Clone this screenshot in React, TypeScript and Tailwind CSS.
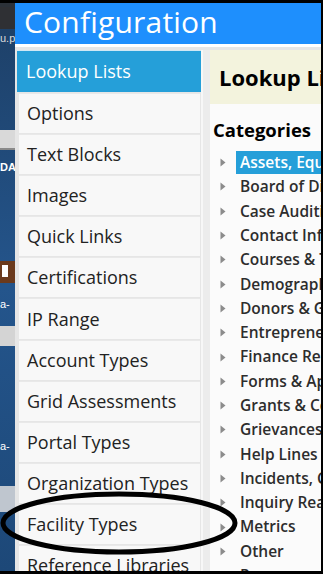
const menu = [
  'Lookup Lists',
  'Options',
  'Text Blocks',
  'Images',
  'Quick Links',
  'Certifications',
  'IP Range',
  'Account Types',
  'Grid Assessments',
  'Portal Types',
  'Organization Types',
  'Facility Types',
  'Reference Libraries',
];

const categories = [
  'Assets, Equipment',
  'Board of Directors',
  'Case Auditing',
  'Contact Information',
  'Courses & Training',
  'Demographics',
  'Donors & Giving',
  'Entrepreneurship',
  'Finance Reports',
  'Forms & Applications',
  'Grants & Contracts',
  'Grievances',
  'Help Lines',
  'Incidents, Complaints',
  'Inquiry Reasons',
  'Metrics',
  'Other',
  'Programs',
];

function Arrow() {
  return (
    <svg width="6" height="9" viewBox="0 0 6 9" className="shrink-0">
      <path d="M0.5 0.5 L5.5 4.5 L0.5 8.5 Z" fill="#8c8c8c" />
    </svg>
  );
}

function DesktopStrip() {
  return (
    <div className="w-[15px] shrink-0 flex flex-col bg-gradient-to-b from-[#1d3f66] via-[#24558c] to-[#1d4878] overflow-hidden text-white text-[11px] leading-none font-['Liberation_Sans',sans-serif]">
      <div className="h-[4px] bg-[#2c3138]" />
      <div className="h-[22px] bg-[#2f3034]" />
      <div className="pt-[4px] text-[#ddd]">u.p</div>
      <div className="h-[86px]" />
      <div className="h-[20px] bg-[#d9d9d9] border-b-2 border-[#8a8a8a]" />
      <div className="pt-[12px] font-bold">DA</div>
      <div className="h-[88px]" />
      <div className="h-[22px] bg-[#6b3a1d] pl-[2px] pt-[4px]">
        <div className="w-[6px] h-[12px] bg-white" />
      </div>
      <div className="pt-[16px]">a-</div>
      <div className="h-[16px]" />
      <div className="h-[20px] bg-[#d4d4d4]" />
      <div className="h-[95px]" />
      <div className="">a-</div>
      <div className="h-[34px]" />
      <div className="h-[26px] bg-[#bfc6cf]" />
    </div>
  );
}

export default function App() {
  return (
    <div className="w-[323px] h-[574px] bg-black overflow-hidden relative pt-[3px] pb-[3px] pr-[2px] flex font-['Open_Sans',sans-serif]">
      <DesktopStrip />
      <div className="flex-1 min-w-0 flex flex-col bg-[#e6e6e6] overflow-hidden">
        <div className="h-[41px] shrink-0 bg-[#1e8ffd] text-white text-[30px] leading-none pl-[9px] pt-[4px] tracking-[0.2px] whitespace-nowrap">
          Configuration
        </div>
        <div className="h-[3px] shrink-0 bg-white" />
        <div className="flex flex-1 min-h-0 pt-[3px]">
          <div className="w-[186px] shrink-0 pl-[2px] flex flex-col gap-[1px] bg-[#e6e6e6]">
            {menu.map((m, i) => (
              <div
                key={m}
                className={
                  i === 0
                    ? 'h-[42px] shrink-0 flex items-center pl-[9px] bg-[#259fd9] text-white text-[18px] border-t border-[#d0e8f4] whitespace-nowrap'
                    : 'h-[40.1px] shrink-0 flex items-center pl-[8px] ml-[2px] mr-[1px] bg-[#f8f8f8] text-[#222] text-[18px] border-t border-[#e9e9e9] whitespace-nowrap overflow-hidden'
                }
              >
                {m}
              </div>
            ))}
          </div>
          <div className="flex-1 min-w-0 flex flex-col border-l-[2px] border-[#f7f7f7] pl-[7px] bg-[#ececec]">
            <div className="flex-1 flex flex-col bg-[#fbfbfb] overflow-hidden">
              <div className="h-[54px] shrink-0 bg-[#f3f3dd] flex items-center pl-[9px] font-bold text-[22px] text-black whitespace-nowrap">
                Lookup Lists
              </div>
              <div className="pl-[3px] pt-[17px] font-bold text-[18.5px] text-black leading-none whitespace-nowrap">
                Categories
              </div>
              <div className="flex flex-col pt-[11px]">
                {categories.map((c, i) => (
                  <div key={c} className="h-[24.3px] shrink-0 flex items-center pl-[10px] gap-[10px] whitespace-nowrap">
                    <Arrow />
                    <div
                      className={
                        i === 0
                          ? 'flex-1 h-[23px] flex items-center pl-[4px] bg-[#259fd9] text-white font-semibold text-[15.5px]'
                          : 'flex-1 pl-[4px] text-[#2d2d2d] font-semibold text-[15.5px]'
                      }
                    >
                      {c}
                    </div>
                  </div>
                ))}
              </div>
            </div>
          </div>
        </div>
      </div>
      <svg className="absolute left-0 top-0 pointer-events-none" width="323" height="574" viewBox="0 0 323 574">
        <ellipse cx="119" cy="523" rx="116" ry="29" fill="none" stroke="#000" strokeWidth="5" />
      </svg>
    </div>
  );
}
